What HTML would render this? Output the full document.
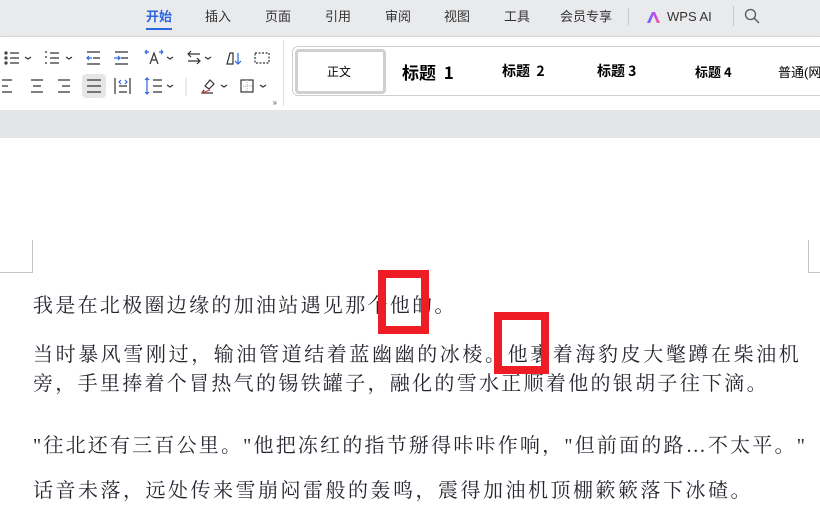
<!DOCTYPE html>
<html><head><meta charset="utf-8"><style>
*{margin:0;padding:0;box-sizing:border-box}
body{width:820px;height:510px;overflow:hidden;background:#fff;position:relative;font-family:"Liberation Sans","Noto Sans CJK SC",sans-serif}
.top{position:absolute;left:0;top:0;width:820px;height:36px;background:#e9eaec}
.tab{position:absolute;top:8px;font-size:13px;color:#333;line-height:18px}
.ribbon{position:absolute;left:0;top:36px;width:820px;height:74px;background:#fff;border-top:1px solid #d6d7d9;box-shadow:0 1px 2px rgba(0,0,0,.12)}
.band{position:absolute;left:0;top:110px;width:820px;height:28px;background:#e4e5e7}
.abs{position:absolute}
.gal{position:absolute;left:292px;top:46px;width:540px;height:50px;border:1px solid #cfcfcf;border-radius:6px;border-right:none}
.h{position:absolute;font-family:"Noto Sans CJK SC",sans-serif;font-weight:bold;color:#000;white-space:nowrap}
.p{position:absolute;left:33px;font-family:"Liberation Serif","Noto Serif CJK SC",serif;font-size:20px;line-height:20px;letter-spacing:2.3px;color:#262630;white-space:nowrap}
.mk{position:absolute;background:#c4c4c4}
.red{position:absolute;border:8px solid #ee1c24}
</style></head><body>
<div class="top"></div>
<div class="tab" style="left:146px;color:#2b67e0;font-weight:bold">开始</div>
<div class="abs" style="left:146px;top:28px;width:26px;height:2px;background:#2b67e0"></div>
<div class="tab" style="left:205px">插入</div>
<div class="tab" style="left:265px">页面</div>
<div class="tab" style="left:325px">引用</div>
<div class="tab" style="left:385px">审阅</div>
<div class="tab" style="left:444px">视图</div>
<div class="tab" style="left:504px">工具</div>
<div class="tab" style="left:560px">会员专享</div>
<div class="abs" style="left:628px;top:8px;width:1px;height:17px;background:#c8c8c8"></div>
<svg class="abs" style="left:646px;top:10px" width="16" height="14" viewBox="0 0 16 14"><defs><linearGradient id="g" x1="0" x2="1"><stop offset="0" stop-color="#5b6cff"/><stop offset=".6" stop-color="#c04cf0"/><stop offset="1" stop-color="#ff5a7a"/></linearGradient></defs><path d="M1 13L6 2h3l5 11h-3L7.5 5 4 13z" fill="url(#g)"/></svg>
<div class="tab" style="left:667px">WPS AI</div>
<div class="abs" style="left:733px;top:6px;width:1px;height:20px;background:#c8c8c8"></div>
<svg class="abs" style="left:744px;top:8px" width="16" height="16" viewBox="0 0 16 16"><circle cx="6.5" cy="6.5" r="5" fill="none" stroke="#555" stroke-width="1.3"/><path d="M10 10l5 5" stroke="#555" stroke-width="1.3"/></svg>

<div class="ribbon"></div>
<svg class="abs" style="left:0;top:36px" width="290" height="74" viewBox="0 36 290 74" fill="none" stroke="#333" stroke-width="1.2">
<g><circle cx="6" cy="53" r="1" /><circle cx="6" cy="58" r="1"/><circle cx="6" cy="63" r="1"/><path d="M10 53h9M10 58h9M10 63h9"/><path d="M25 57l3 2 3-2"/></g>
<g><path d="M50 53h9M50 58h9M50 63h9M45 52h2M45 57h2M45 63h2"/><path d="M66 57l3 2 3-2"/></g>
<g><path d="M87 52h13M93 58h7M87 64h13" /><path d="M92 58h-5m2-2l-2 2 2 2" stroke="#2b67e0"/></g>
<g><path d="M115 52h13M121 58h7M115 64h13"/><path d="M114 58h6m-2-2l2 2-2 2" stroke="#2b67e0"/></g>
<g><path d="M150 64l4-11 4 11M151 60h6"/><path d="M145 52l2-2M145 52l2 2M145 52h4M163 52l-2-2M163 52l-2 2M163 52h-4" stroke="#2b67e0"/><path d="M167 57l3 2 3-2"/></g>
<g><path d="M200 54h-12m3-3l-3 3 3 3M188 61h12m-3-3l3 3-3 3"/><path d="M205 57l3 2 3-2"/></g>
<g><path d="M227 64l3-11h3v11zM227 64h6"/><path d="M238 53v11m-3-3l3 3 3-3" stroke="#2b67e0"/></g>
<g><rect x="255" y="53" width="14" height="10" stroke-dasharray="2 1.5"/></g>
<path d="M2 80h10M2 86h6M2 92h10"/>
<path d="M31 80h12M33 86h8M31 92h12"/>
<path d="M58 80h12M62 86h8M58 92h12"/>
<rect x="82" y="74" width="24" height="24" rx="4" fill="#e6e6e6" stroke="none"/>
<path d="M87 80h14M87 86h14M87 92h14"/>
<path d="M115 78v16M130 78v16M119 86h8M119 92h8"/><path d="M121 80l-2 2 2 2M125 80l2 2-2 2" stroke="#2b67e0"/>
<path d="M147 78v16m-2-14l2-2 2 2m-4 12l2 2 2-2" stroke="#2b67e0"/><path d="M153 80h9M153 86h9M153 92h9"/><path d="M167 85l3 2 3-2"/>
<path d="M186 78v18" stroke="#ddd"/>
<path d="M205 86l5-6 4 4-5 5zM204 90l-2 3h11" /><path d="M202 93l8-3" stroke="#e03030"/><path d="M221 85l3 2 3-2"/>
<rect x="241" y="80" width="12" height="12"/><path d="M247 80v12M241 86h12" stroke="#bbb" stroke-dasharray="1 1"/><path d="M260 85l3 2 3-2"/>
<path d="M273 101l3 3m0-3v3h-3" stroke="#888" stroke-width="0.8"/>
</svg>
<div class="abs" style="left:283px;top:40px;width:1px;height:66px;background:#dcdcdc"></div>
<div class="gal"></div>
<div class="abs" style="left:295px;top:49px;width:91px;height:45px;border:3px solid #d0d0d0;border-radius:4px;background:#fff"></div>
<div class="abs" style="left:327px;top:63px;font-size:12px;color:#000">正文</div>
<div class="h" style="left:402px;top:59px;font-size:17px">标题&nbsp;&nbsp;1</div>
<div class="h" style="left:502px;top:61px;font-size:14px">标题&nbsp;&nbsp;2</div>
<div class="h" style="left:597px;top:61px;font-size:14px">标题&nbsp;3</div>
<div class="h" style="left:695px;top:62px;font-size:13px">标题&nbsp;4</div>
<div class="abs" style="left:778px;top:62px;font-size:13px;color:#000;white-space:nowrap">普通(网</div>
<div class="band"></div>

<div class="mk" style="left:32px;top:240px;width:1px;height:33px"></div>
<div class="mk" style="left:0;top:272px;width:32px;height:1px"></div>
<div class="mk" style="left:808px;top:240px;width:1px;height:33px"></div>
<div class="mk" style="left:808px;top:272px;width:12px;height:1px"></div>

<div class="p" style="top:296px">我是在北极圈边缘的加油站遇见那个他的。</div>
<div class="p" style="top:345px;letter-spacing:2.6px">当时暴风雪刚过，输油管道结着蓝幽幽的冰棱。他裹着海豹皮大氅蹲在柴油机</div>
<div class="p" style="top:374px">旁，手里捧着个冒热气的锡铁罐子，融化的雪水正顺着他的银胡子往下滴。</div>
<div class="p" style="top:436px;letter-spacing:2.2px">"往北还有三百公里。"他把冻红的指节掰得咔咔作响，"但前面的路…不太平。"</div>
<div class="p" style="top:481px;letter-spacing:2.5px">话音未落，远处传来雪崩闷雷般的轰鸣，震得加油机顶棚簌簌落下冰碴。</div>

<div class="red" style="left:378px;top:270px;width:51px;height:64px"></div>
<div class="red" style="left:494px;top:312px;width:55px;height:62px"></div>
</body></html>
